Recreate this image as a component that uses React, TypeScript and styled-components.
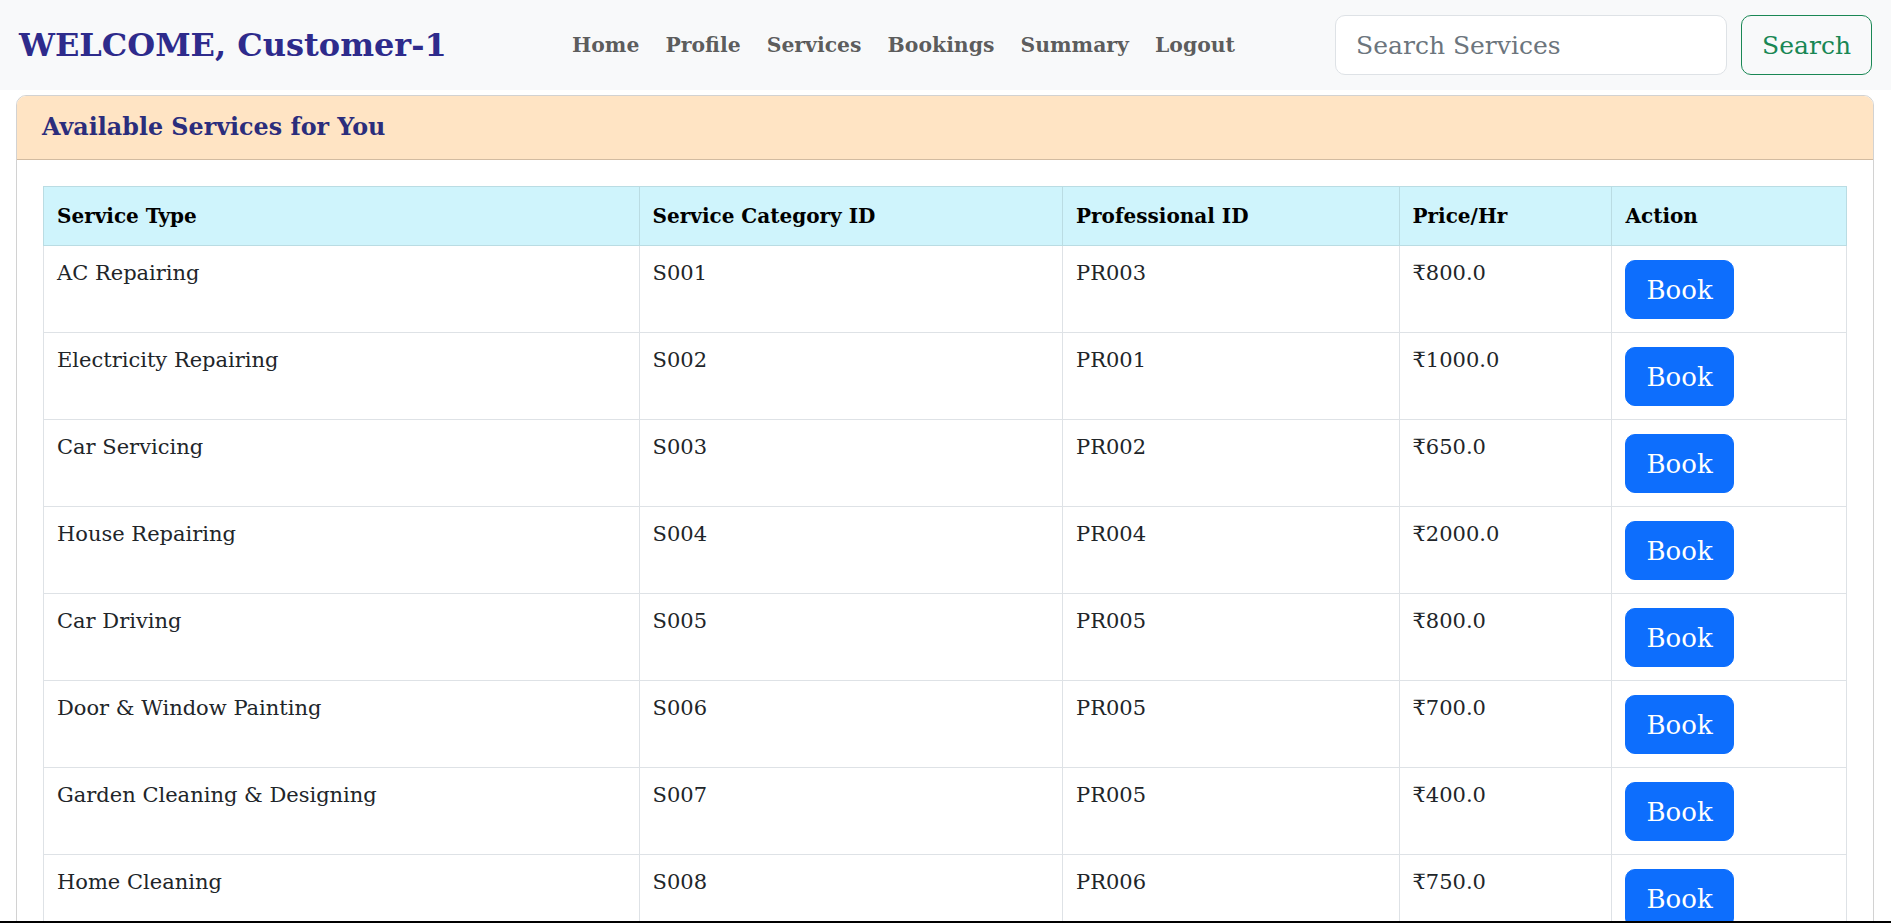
import React from "react";
import styled, { createGlobalStyle } from "styled-components";

const GlobalStyle = createGlobalStyle`
  html, body { margin: 0; padding: 0; }
  body {
    font-family: "DejaVu Serif", "Liberation Serif", serif;
    font-size: 20px;
    line-height: 1.5;
    color: #212529;
    background: #ffffff;
  }
  * { box-sizing: border-box; }
`;

const Navbar = styled.nav`
  display: grid;
  grid-template-columns: 540px auto 1fr auto;
  align-items: center;
  height: 90px;
  padding: 0 19px;
  background: #f8f9fa;
`;

const Brand = styled.a`
  font-size: 32px;
  font-weight: 700;
  color: #2e2b8c;
  text-decoration: none;
  white-space: nowrap;
`;

const NavList = styled.ul`
  display: flex;
  list-style: none;
  margin: 0;
  padding: 0;
`;

const NavLink = styled.a`
  display: block;
  padding: 8px 13px;
  font-size: 20.4px;
  font-weight: 700;
  color: rgba(0, 0, 0, 0.65);
  text-decoration: none;
`;

const SearchForm = styled.form`
  grid-column: 4;
  display: flex;
  gap: 14px;
`;

const SearchInput = styled.input`
  width: 392px;
  height: 60px;
  padding: 10px 20px;
  font-family: inherit;
  font-size: 25px;
  color: #212529;
  background: #fff;
  border: 1px solid #dee2e6;
  border-radius: 10px;
  &::placeholder { color: #6c757d; }
`;

const OutlineButton = styled.button`
  height: 60px;
  padding: 0 20px;
  font-family: inherit;
  font-size: 25px;
  color: #198754;
  background: transparent;
  border: 1px solid #198754;
  border-radius: 10px;
`;

const Card = styled.section`
  margin: 5px 17px 0 16px;
  border: 1px solid rgba(0, 0, 0, 0.175);
  border-radius: 10px;
  overflow: hidden;
`;

const CardHeader = styled.header`
  display: flex;
  align-items: center;
  height: 64px;
  padding: 0 25px;
  background: #ffe4c4;
  border-bottom: 1px solid rgba(0, 0, 0, 0.175);
`;

const CardTitle = styled.h2`
  margin: 0;
  font-size: 23.8px;
  font-weight: 700;
  color: #2b2d7c;
`;

const CardBody = styled.div`
  padding: 26px;
`;

const Table = styled.table`
  width: 100%;
  border-collapse: collapse;
  table-layout: fixed;
`;

const HeadCell = styled.th`
  padding: 14px 13px;
  text-align: left;
  font-size: 20px;
  font-weight: 700;
  line-height: 30px;
  color: #000;
  background: #cff4fc;
  border: 1px solid #badce3;
`;

const Cell = styled.td`
  padding: 14px 13px 13px;
  vertical-align: top;
  font-size: 21px;
  line-height: 27px;
  color: #212529;
  border: 1px solid #dee2e6;
`;

const BookButton = styled.button`
  height: 59px;
  padding: 0 20px;
  font-family: inherit;
  font-size: 26px;
  color: #fff;
  background: #0d6efd;
  border: 1px solid #0d6efd;
  border-radius: 10px;
`;

const BottomEdge = styled.div`
  position: fixed;
  left: 0;
  right: 0;
  bottom: 0;
  height: 2px;
  background: #000;
`;

const columns = [
  { label: "Service Type", width: 595.6 },
  { label: "Service Category ID", width: 423.5 },
  { label: "Professional ID", width: 336.5 },
  { label: "Price/Hr", width: 213 },
  { label: "Action", width: 234.5 },
];

const services = [
  ["AC Repairing", "S001", "PR003", "₹800.0"],
  ["Electricity Repairing", "S002", "PR001", "₹1000.0"],
  ["Car Servicing", "S003", "PR002", "₹650.0"],
  ["House Repairing", "S004", "PR004", "₹2000.0"],
  ["Car Driving", "S005", "PR005", "₹800.0"],
  ["Door & Window Painting", "S006", "PR005", "₹700.0"],
  ["Garden Cleaning & Designing", "S007", "PR005", "₹400.0"],
  ["Home Cleaning", "S008", "PR006", "₹750.0"],
];

const navItems = ["Home", "Profile", "Services", "Bookings", "Summary", "Logout"];

export default function App() {
  const total = columns.reduce((s, c) => s + c.width, 0);
  return (
    <>
      <GlobalStyle />
      <Navbar>
        <Brand href="#">WELCOME, Customer-1</Brand>
        <NavList>
          {navItems.map((n) => (
            <li key={n}>
              <NavLink href="#">{n}</NavLink>
            </li>
          ))}
        </NavList>
        <SearchForm onSubmit={(e) => e.preventDefault()}>
          <SearchInput placeholder="Search Services" />
          <OutlineButton type="submit">Search</OutlineButton>
        </SearchForm>
      </Navbar>
      <Card>
        <CardHeader>
          <CardTitle>Available Services for You</CardTitle>
        </CardHeader>
        <CardBody>
          <Table>
            <colgroup>
              {columns.map((c) => (
                <col key={c.label} style={{ width: `${(c.width / total) * 100}%` }} />
              ))}
            </colgroup>
            <thead>
              <tr>
                {columns.map((c) => (
                  <HeadCell key={c.label}>{c.label}</HeadCell>
                ))}
              </tr>
            </thead>
            <tbody>
              {services.map((row) => (
                <tr key={row[1]}>
                  {row.map((v, i) => (
                    <Cell key={i}>{v}</Cell>
                  ))}
                  <Cell>
                    <BookButton>Book</BookButton>
                  </Cell>
                </tr>
              ))}
            </tbody>
          </Table>
        </CardBody>
      </Card>
      <BottomEdge />
    </>
  );
}
